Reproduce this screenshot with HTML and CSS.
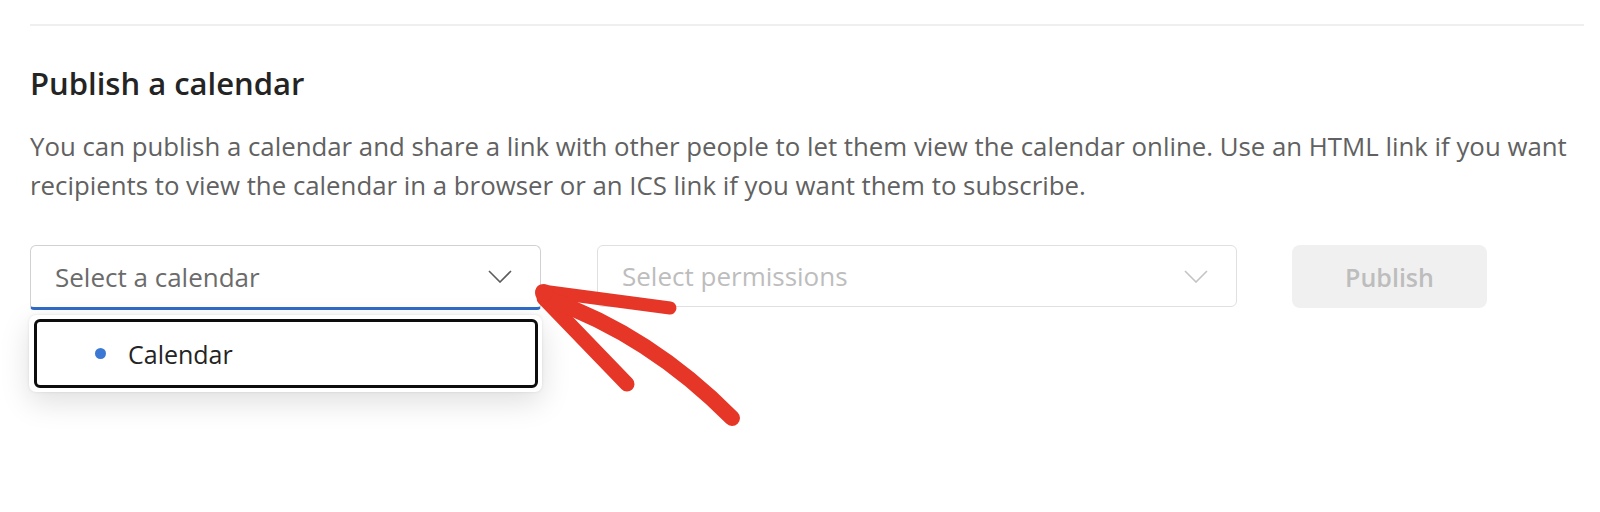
FILE: index.html
```html
<!DOCTYPE html>
<html lang="en">
<head>
<meta charset="utf-8">
<title>Publish a calendar</title>
<link rel="stylesheet" href="styles.css">
</head>
<body>
<div class="page">
  <div class="divider"></div>
  <h2 class="title">Publish a calendar</h2>
  <p class="desc">You can publish a calendar and share a link with other people to let them view the calendar online. Use an HTML link if you want recipients to view the calendar in a browser or an ICS link if you want them to subscribe.</p>
  <div class="row">
    <div class="picker">
      <div class="select select-active">
        <span class="select-text">Select a calendar</span>
        <svg class="chev" viewBox="0 0 24 13" width="24" height="13"><path d="M1 1 L12 12 L23 1" fill="none" stroke="currentColor" stroke-width="1.6"/></svg>
      </div>
      <div class="menu">
        <div class="menu-item">
          <span class="dot"></span>
          <span class="menu-text">Calendar</span>
        </div>
      </div>
    </div>
    <div class="select select-disabled">
      <span class="select-text">Select permissions</span>
      <svg class="chev" viewBox="0 0 24 13" width="24" height="13"><path d="M1 1 L12 12 L23 1" fill="none" stroke="currentColor" stroke-width="1.6"/></svg>
    </div>
    <button class="publish" disabled>Publish</button>
  </div>
  <svg class="annotation" viewBox="0 0 240 180" width="240" height="180">
    <g fill="none" stroke="#e53627" stroke-linecap="round">
      <path d="M22 21 L150 38" stroke-width="13"/>
      <path d="M24 28 L107 114" stroke-width="15"/>
      <path d="M28 29 Q130 65 212 148" stroke-width="16"/>
    </g>
    <circle cx="24" cy="23" r="9" fill="#e53627"/>
  </svg>
</div>
</body>
</html>
```
FILE: styles.css
```css
* { box-sizing: border-box; }
html, body { margin: 0; padding: 0; background: #ffffff; }
body { font-family: "Open Sans", "Noto Sans", sans-serif; color: #242424; }

.page {
  position: relative;
  height: 512px;
  padding: 24px 16px 0 30px;
}

.divider {
  height: 2px;
  background: #efefef;
}

.title {
  margin: 37px 0 0 0;
  font-size: 31px;
  line-height: 40px;
  font-weight: 600;
  color: #242424;
}

.desc {
  margin: 24px 0 0 0;
  font-size: 25.8px;
  line-height: 39px;
  color: #616161;
  width: 1560px;
}

.row {
  display: flex;
  align-items: flex-start;
  margin-top: 40px;
}

.picker {
  position: relative;
  width: 511px;
}

.select {
  display: flex;
  align-items: center;
  justify-content: space-between;
  height: 62px;
  border: 1px solid #d1d1d1;
  border-radius: 6px;
  padding: 0 28px 0 24px;
  font-size: 26px;
}

.select-active {
  height: 65px;
  border-bottom: 3px solid #2f6bc7;
  border-bottom-left-radius: 4px;
  border-bottom-right-radius: 4px;
  color: #6b6b6b;
}

.select-active .chev { color: #5c5c5c; }

.select-disabled {
  width: 640px;
  margin-left: 56px;
  border-color: #e0e0e0;
  color: #bdbdbd;
}

.select-disabled .chev { color: #c4c4c4; }

.chev { display: block; flex: none; }

.publish {
  margin-left: 55px;
  width: 195px;
  height: 63px;
  border: none;
  border-radius: 8px;
  background: #f0f0f0;
  color: #bdbdbd;
  font-family: "Open Sans", "Noto Sans", sans-serif;
  font-size: 25px;
  font-weight: 600;
  padding: 0;
}

.menu {
  position: absolute;
  left: -1px;
  top: 70px;
  width: 513px;
  height: 77px;
  background: #ffffff;
  border-radius: 7px;
  padding: 4px 4px 4px 5px;
  box-shadow: 0 10px 30px rgba(0, 0, 0, 0.13), 0 0 3px rgba(0, 0, 0, 0.10);
}

.menu-item {
  display: flex;
  align-items: center;
  height: 69px;
  border: 3px solid #0d0d0d;
  border-radius: 6px;
  padding-left: 58px;
}

.dot {
  width: 11px;
  height: 11px;
  border-radius: 50%;
  background: #3a78d4;
  flex: none;
}

.menu-text {
  margin-left: 22px;
  font-size: 25px;
  color: #242424;
}

.annotation {
  position: absolute;
  left: 520px;
  top: 270px;
  overflow: visible;
}
```
